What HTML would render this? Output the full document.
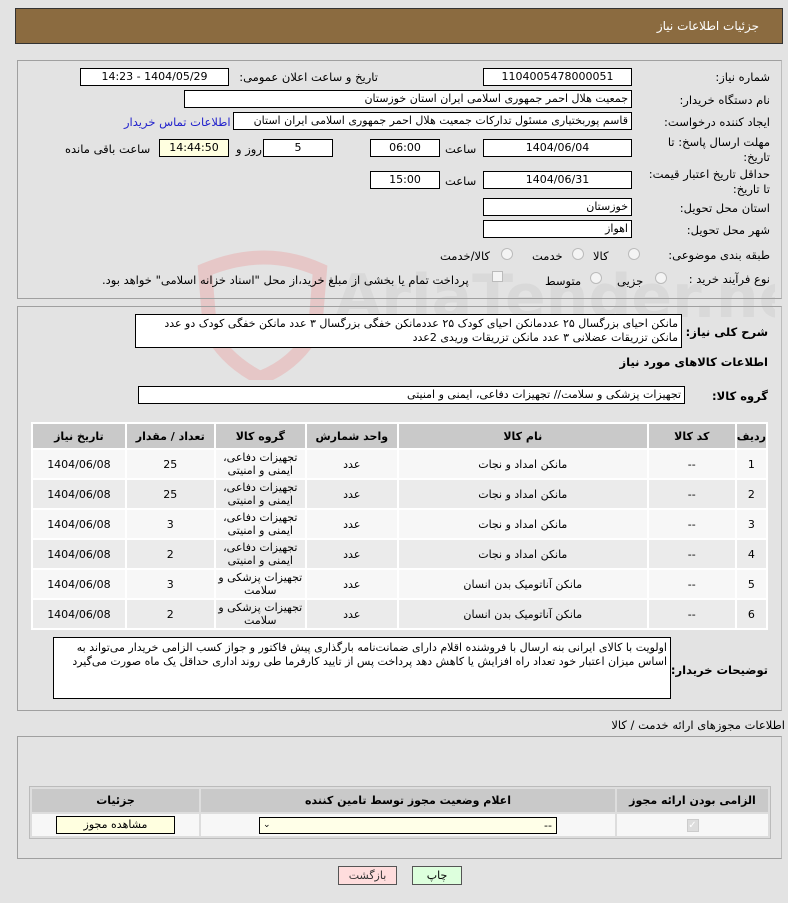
<!DOCTYPE html>
<html><head><meta charset="utf-8"><style>
*{box-sizing:border-box;margin:0;padding:0}
body{width:788px;height:903px;background:#e3e3e3;font-family:"DejaVu Sans","Liberation Sans",sans-serif;font-size:11px;color:#000;position:relative;overflow:hidden;direction:rtl}
.a{position:absolute;white-space:nowrap}
.box{position:absolute;background:#fff;border:1px solid #000;height:18px;line-height:16px;padding:0 3px;overflow:hidden;white-space:nowrap}
.c{text-align:center}
.lbl{position:absolute;white-space:nowrap;font-size:11.5px}
.panel{position:absolute;left:17px;width:765px;border:1px solid #a0a0a0;border-right-color:#bbb}
.radio{position:absolute;width:12px;height:12px;border-radius:50%;border:1px solid #bbb;background:#f4f4f4}
table{border-collapse:separate;border-spacing:2px;position:absolute}
td,th{text-align:center;font-size:11px}
th{background:#c9c9c9;font-weight:bold}
</style></head><body>
<!-- watermark -->
<svg class="a" style="left:195px;top:250px" width="140" height="130" viewBox="0 0 140 130"><path d="M10 20 Q70 -5 125 20 L120 80 Q100 115 65 128 Q30 110 15 80 Z" fill="none" stroke="#e8b4b4" stroke-width="14" opacity=".6"/></svg>
<div class="a" style="left:335px;top:262px;width:440px;height:90px;overflow:hidden;direction:ltr"><span style="font-size:60px;color:#d9d9d9;font-weight:bold">AriaTender.neT</span></div>

<div class="a" style="left:15px;top:8px;width:768px;height:36px;background:#8b6b40;border:1px solid #333"></div>
<div class="a" style="right:29px;top:19px;color:#fff;font-size:12px">جزئیات اطلاعات نیاز</div>

<div class="panel" style="top:60px;height:239px"></div>

<div class="lbl" style="right:18px;top:70px">شماره نیاز:</div>
<div class="box c" style="left:483px;top:68px;width:149px">1104005478000051</div>
<div class="lbl" style="right:410px;top:70px">تاریخ و ساعت اعلان عمومی:</div>
<div class="box c" style="left:80px;top:68px;width:149px">1404/05/29 - 14:23</div>

<div class="lbl" style="right:18px;top:93px">نام دستگاه خریدار:</div>
<div class="box" style="left:184px;top:90px;width:448px">جمعیت هلال احمر جمهوری اسلامی ایران استان خوزستان</div>

<div class="lbl" style="right:18px;top:115px">ایجاد کننده درخواست:</div>
<div class="box" style="left:233px;top:112px;width:399px">قاسم پوربختیاری مسئول تدارکات جمعیت هلال احمر جمهوری اسلامی ایران استان</div>
<div class="lbl" style="left:124px;top:115px;color:#2222cc">اطلاعات تماس خریدار</div>

<div class="lbl" style="right:18px;top:135px;text-align:right;line-height:15px">مهلت ارسال پاسخ: تا<br>تاریخ:</div>
<div class="box c" style="left:483px;top:139px;width:149px">1404/06/04</div>
<div class="lbl" style="left:445px;top:142px">ساعت</div>
<div class="box c" style="left:370px;top:139px;width:70px">06:00</div>
<div class="box c" style="left:263px;top:139px;width:70px">5</div>
<div class="lbl" style="left:236px;top:142px">روز و</div>
<div class="box c" style="left:159px;top:139px;width:70px;background:#ffffe0">14:44:50</div>
<div class="lbl" style="left:65px;top:142px">ساعت باقی مانده</div>

<div class="lbl" style="right:18px;top:167px;text-align:right;line-height:15px">حداقل تاریخ اعتبار قیمت:<br>تا تاریخ:</div>
<div class="box c" style="left:483px;top:171px;width:149px">1404/06/31</div>
<div class="lbl" style="left:445px;top:174px">ساعت</div>
<div class="box c" style="left:370px;top:171px;width:70px">15:00</div>

<div class="lbl" style="right:18px;top:201px">استان محل تحویل:</div>
<div class="box" style="left:483px;top:198px;width:149px">خوزستان</div>
<div class="lbl" style="right:18px;top:223px">شهر محل تحویل:</div>
<div class="box" style="left:483px;top:220px;width:149px">اهواز</div>

<div class="lbl" style="right:18px;top:248px">طبقه بندی موضوعی:</div>
<div class="radio" style="left:628px;top:248px"></div><div class="lbl" style="left:593px;top:249px">کالا</div>
<div class="radio" style="left:572px;top:248px"></div><div class="lbl" style="left:532px;top:249px">خدمت</div>
<div class="radio" style="left:501px;top:248px"></div><div class="lbl" style="left:440px;top:249px">کالا/خدمت</div>

<div class="lbl" style="right:18px;top:272px">نوع فرآیند خرید :</div>
<div class="radio" style="left:655px;top:272px"></div><div class="lbl" style="left:617px;top:274px">جزیی</div>
<div class="radio" style="left:590px;top:272px"></div><div class="lbl" style="left:545px;top:274px">متوسط</div>
<div class="a" style="left:492px;top:271px;width:11px;height:11px;border:1px solid #bbb;background:#f4f4f4"></div>
<div class="lbl" style="left:102px;top:273px">پرداخت تمام یا بخشی از مبلغ خرید،از محل "اسناد خزانه اسلامی" خواهد بود.</div>

<div class="panel" style="top:306px;height:405px"></div>
<div class="lbl" style="right:20px;top:325px;font-weight:bold">شرح کلی نیاز:</div>
<div class="box" style="left:135px;top:314px;width:547px;height:34px;white-space:normal;line-height:14px;padding-top:2px">مانکن احیای بزرگسال ۲۵ عددمانکن احیای کودک ۲۵ عددمانکن خفگی بزرگسال ۳ عدد مانکن خفگی کودک دو عدد مانکن تزریقات عضلانی ۳ عدد مانکن تزریقات وریدی 2عدد</div>
<div class="lbl" style="right:20px;top:355px;font-weight:bold">اطلاعات کالاهای مورد نیاز</div>
<div class="lbl" style="right:20px;top:389px;font-weight:bold">گروه کالا:</div>
<div class="box" style="left:138px;top:386px;width:547px">تجهیزات پزشکی و سلامت// تجهیزات دفاعی، ایمنی و امنیتی</div>

<table style="left:31px;top:422px;width:737px;background:#fff">
<tr style="height:24px"><th style="width:26px">ردیف</th><th style="width:86px">کد کالا</th><th style="width:248px">نام کالا</th><th style="width:90px">واحد شمارش</th><th style="width:89px">گروه کالا</th><th style="width:87px">تعداد / مقدار</th><th>تاریخ نیاز</th></tr>
<tr style="height:28px;background:#f7f7f7"><td>1</td><td>--</td><td>مانکن امداد و نجات</td><td>عدد</td><td style="line-height:13px">تجهیزات دفاعی،<br>ایمنی و امنیتی</td><td>25</td><td>1404/06/08</td></tr>
<tr style="height:28px;background:#ebebeb"><td>2</td><td>--</td><td>مانکن امداد و نجات</td><td>عدد</td><td style="line-height:13px">تجهیزات دفاعی،<br>ایمنی و امنیتی</td><td>25</td><td>1404/06/08</td></tr>
<tr style="height:28px;background:#f7f7f7"><td>3</td><td>--</td><td>مانکن امداد و نجات</td><td>عدد</td><td style="line-height:13px">تجهیزات دفاعی،<br>ایمنی و امنیتی</td><td>3</td><td>1404/06/08</td></tr>
<tr style="height:28px;background:#ebebeb"><td>4</td><td>--</td><td>مانکن امداد و نجات</td><td>عدد</td><td style="line-height:13px">تجهیزات دفاعی،<br>ایمنی و امنیتی</td><td>2</td><td>1404/06/08</td></tr>
<tr style="height:28px;background:#f7f7f7"><td>5</td><td>--</td><td>مانکن آناتومیک بدن انسان</td><td>عدد</td><td style="line-height:13px">تجهیزات پزشکی و<br>سلامت</td><td>3</td><td>1404/06/08</td></tr>
<tr style="height:28px;background:#ebebeb"><td>6</td><td>--</td><td>مانکن آناتومیک بدن انسان</td><td>عدد</td><td style="line-height:13px">تجهیزات پزشکی و<br>سلامت</td><td>2</td><td>1404/06/08</td></tr>
</table>

<div class="lbl" style="right:20px;top:663px;font-weight:bold">توضیحات خریدار:</div>
<div class="box" style="left:53px;top:637px;width:618px;height:62px;white-space:normal;line-height:14px;padding-top:3px">اولویت با کالای ایرانی بنه ارسال با فروشنده اقلام دارای ضمانت‌نامه بارگذاری پیش فاکتور و جواز کسب الزامی خریدار می‌تواند به اساس میزان اعتبار خود تعداد راه افزایش یا کاهش دهد پرداخت پس از تایید کارفرما طی روند اداری حداقل یک ماه صورت می‌گیرد</div>

<div class="lbl" style="right:3px;top:718px">اطلاعات مجوزهای ارائه خدمت / کالا</div>
<div class="panel" style="top:736px;height:123px"></div>
<table style="left:29px;top:786px;width:742px;background:#ddd;border:1px solid #bbb">
<tr style="height:23px"><th style="width:151px">الزامی بودن ارائه مجوز</th><th style="width:414px">اعلام وضعیت مجوز توسط تامین کننده</th><th>جزئیات</th></tr>
<tr style="height:22px;background:#f7f7f7"><td><span style="display:inline-block;width:12px;height:13px;background:#ddd;border:1px solid #ccc;color:#fff;font-size:10px;line-height:12px">✓</span></td><td><div style="margin:0 auto 0 58px;width:298px;height:17px;border:1px solid #000;background:#ffffe8;text-align:right;padding-right:4px;line-height:15px;position:relative">--<span style="position:absolute;left:3px;top:0;font-size:9px">⌄</span></div></td><td><div style="margin:0 auto;width:119px;height:18px;border:1px solid #000;background:#ffffe0;line-height:16px">مشاهده مجوز</div></td></tr>
</table>

<div class="a" style="left:338px;top:866px;width:59px;height:19px;border:1px solid #555;background:#fdd;text-align:center;line-height:17px;color:#333">بازگشت</div>
<div class="a" style="left:412px;top:866px;width:50px;height:19px;border:1px solid #555;background:#dfd;text-align:center;line-height:17px">چاپ</div>
</body></html>
